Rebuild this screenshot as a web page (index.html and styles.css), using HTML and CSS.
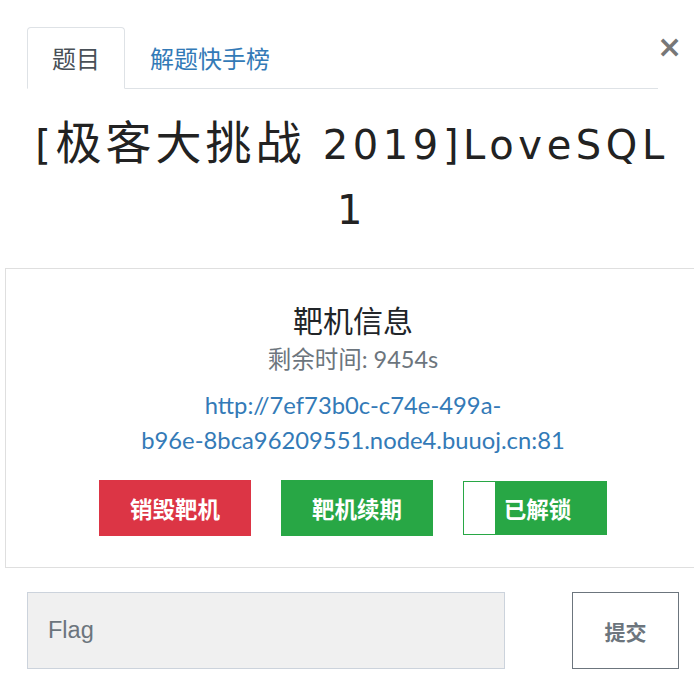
FILE: index.html
```html
<!DOCTYPE html>
<html lang="zh">
<head>
<meta charset="utf-8">
<title>LoveSQL</title>
<link rel="stylesheet" href="styles.css">
</head>
<body>
<div class="modal">
  <div class="header">
    <ul class="tabs">
      <li class="tab active">题目</li>
      <li class="tab link">解题快手榜</li>
    </ul>
    <button class="close" aria-label="close">&times;</button>
  </div>
  <h1 class="title">[<span class="cjk">极客大挑战</span> 2019]LoveSQL 1</h1>
  <div class="card">
    <h3 class="card-title">靶机信息</h3>
    <p class="remain">剩余时间: 9454s</p>
    <a class="addr" href="#">http://7ef73b0c-c74e-499a-<br>b96e-8bca96209551.node4.buuoj.cn:81</a>
    <div class="actions">
      <button class="btn red">销毁靶机</button>
      <button class="btn green">靶机续期</button>
      <div class="toggle"><span class="knob"></span><span class="toggle-label">已解锁</span></div>
    </div>
  </div>
  <div class="flag-row">
    <input class="flag" type="text" placeholder="Flag">
    <button class="submit">提交</button>
  </div>
</div>
</body>
</html>
```

FILE: styles.css
```css
html, body {
  margin: 0;
  padding: 0;
  overflow: hidden;
  background: #fff;
}
body {
  font-family: Lato, "Noto Sans CJK SC", sans-serif;
  color: #212529;
}
.modal {
  width: 694px;
}
.header {
  display: flex;
  align-items: flex-start;
  padding: 27px 0 0 27px;
}
.tabs {
  list-style: none;
  margin: 0;
  padding: 0;
  display: flex;
  width: 631px;
  border-bottom: 1px solid #dee2e6;
}
.tab {
  font-family: "Noto Sans CJK SC", sans-serif;
  font-size: 24px;
  line-height: 36px;
  padding: 12px 24px;
  margin-bottom: -1px;
  border: 1px solid transparent;
  border-radius: 4px 4px 0 0;
}
.tab.active {
  color: #495057;
  border-color: #dee2e6 #dee2e6 #fff;
  background: #fff;
}
.tab.link {
  color: #337ab7;
}
.close {
  margin: 5px 0 0 -1px;
  padding: 0;
  border: 0;
  background: none;
  font-family: "DejaVu Sans", sans-serif;
  font-weight: bold;
  font-size: 30px;
  line-height: 30px;
  color: #777;
  width: 24px;
}
.title {
  font-family: "DejaVu Sans", "Noto Sans CJK SC", sans-serif;
  font-weight: 400;
  font-size: 40px;
  line-height: 65px;
  letter-spacing: 4.6px;
  text-align: center;
  color: #222;
  width: 650px;
  margin: 18px 0 0 27px;
}
.cjk {
  font-family: "Noto Sans CJK SC", sans-serif;
  font-size: 46px;
  line-height: 65px;
  letter-spacing: 4px;
}
.card {
  margin: 25px -7px 0 5px;
  border: 1px solid #dfdfdf;
  text-align: center;
  padding: 30px 0 31px;
}
.card-title {
  font-family: "Noto Sans CJK SC", sans-serif;
  font-weight: 400;
  font-size: 30px;
  line-height: 40px;
  margin: 0;
}
.remain {
  font-size: 23.5px;
  line-height: 30px;
  color: #6c757d;
  margin: 5px 0 14px;
}
.addr {
  display: block;
  font-size: 23.8px;
  line-height: 35px;
  color: #337ab7;
  text-decoration: none;
}
.actions {
  display: flex;
  justify-content: center;
  gap: 30px;
  margin-top: 22px;
}
.btn {
  width: 152px;
  height: 56px;
  border: 0;
  color: #fff;
  font-family: "Noto Sans CJK SC", sans-serif;
  font-weight: bold;
  font-size: 22.5px;
  padding: 0;
}
.red { background: #dc3545; }
.green { background: #28a745; }
.toggle {
  display: flex;
  width: 144px;
  height: 54px;
  margin-top: 1px;
  box-sizing: border-box;
  border: 1px solid #28a745;
  background: #28a745;
}
.knob {
  width: 31px;
  background: #fff;
}
.toggle-label {
  flex: 1;
  display: flex;
  align-items: center;
  justify-content: center;
  padding-right: 26px;
  color: #fff;
  font-family: "Noto Sans CJK SC", sans-serif;
  font-weight: bold;
  font-size: 22.5px;
}
.flag-row {
  display: flex;
  align-items: center;
  justify-content: space-between;
  margin: 24px 0 0 27px;
  width: 652px;
}
.flag {
  width: 478px;
  height: 77px;
  box-sizing: border-box;
  background: #f0f0f0;
  border: 1px solid #ccd3dc;
  padding: 0 20px;
  font-family: "Liberation Sans", Arial, sans-serif;
  font-size: 23.5px;
  color: #495057;
  outline: none;
}
.flag::placeholder { color: #6c757d; }
.submit {
  width: 107px;
  height: 77px;
  box-sizing: border-box;
  background: #fff;
  border: 1px solid #6c757d;
  color: #6c757d;
  font-family: "Noto Sans CJK SC", sans-serif;
  font-weight: bold;
  font-size: 21px;
  padding: 0;
}
```
